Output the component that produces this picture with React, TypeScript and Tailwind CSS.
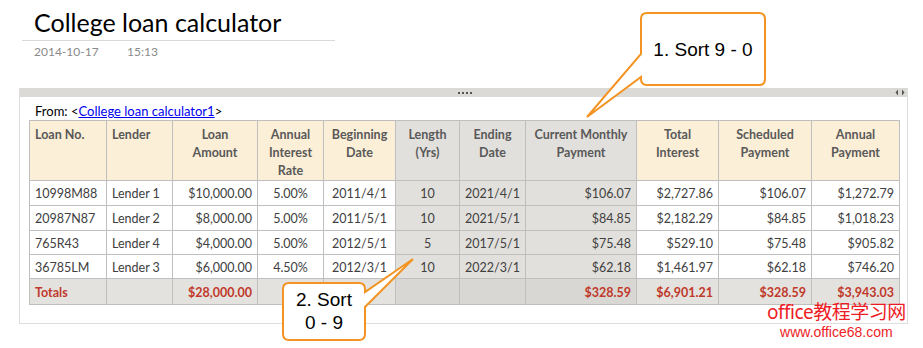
export default function App() {
  const cols = [77, 66, 85, 66, 72, 64, 66, 111, 82, 93, 88];

  // gray columns (Length, Ending Date, Current Monthly Payment)
  const grayCol = [false, false, false, false, false, true, true, true, false, false, false];

  const headers = [
    { t: ["Loan No."], a: "text-left" },
    { t: ["Lender"], a: "text-left" },
    { t: ["Loan", "Amount"], a: "text-center" },
    { t: ["Annual", "Interest", "Rate"], a: "text-center" },
    { t: ["Beginning", "Date"], a: "text-center" },
    { t: ["Length", "(Yrs)"], a: "text-center" },
    { t: ["Ending", "Date"], a: "text-center" },
    { t: ["Current Monthly", "Payment"], a: "text-center" },
    { t: ["Total", "Interest"], a: "text-center" },
    { t: ["Scheduled", "Payment"], a: "text-center" },
    { t: ["Annual", "Payment"], a: "text-center" },
  ];

  const align = [
    "text-left",
    "text-left",
    "text-right",
    "text-center",
    "text-center",
    "text-center",
    "text-center",
    "text-right",
    "text-right",
    "text-right",
    "text-right",
  ];

  const rows = [
    ["10998M88", "Lender 1", "$10,000.00", "5.00%", "2011/4/1", "10", "2021/4/1", "$106.07", "$2,727.86", "$106.07", "$1,272.79"],
    ["20987N87", "Lender 2", "$8,000.00", "5.00%", "2011/5/1", "10", "2021/5/1", "$84.85", "$2,182.29", "$84.85", "$1,018.23"],
    ["765R43", "Lender 4", "$4,000.00", "5.00%", "2012/5/1", "5", "2017/5/1", "$75.48", "$529.10", "$75.48", "$905.82"],
    ["36785LM", "Lender 3", "$6,000.00", "4.50%", "2012/3/1", "10", "2022/3/1", "$62.18", "$1,461.97", "$62.18", "$746.20"],
  ];
  const rowH = [25, 25, 24, 24];

  const totals = ["Totals", "", "$28,000.00", "", "", "", "", "$328.59", "$6,901.21", "$328.59", "$3,943.03"];

  return (
    <div className="relative flex flex-col w-[923px] h-[348px] overflow-hidden bg-white font-['Lato','Noto_Sans',sans-serif]">
      {/* Page title */}
      <div className="pt-[6px] pl-[22px]">
        <div className="w-[313px] border-b border-[#d9d9d9] pl-[12px] pb-[2px]">
          <div className="text-[25px] leading-[32px] text-black">College loan calculator</div>
        </div>
        <div className="flex pl-[12px] pt-[4px] text-[12px] leading-[14px] text-[#8a8a8a]">
          <span className="w-[93px]">2014-10-17</span>
          <span>15:13</span>
        </div>
      </div>

      {/* Note container */}
      <div className="ml-[19px] mt-[29px] w-[889px] h-[236px] border-x border-b border-[#dedede]">
        <div className="flex items-center h-[9px] bg-[#dcdad6]">
          <div className="flex flex-1 justify-center gap-[2px] pl-[14px]">
            <span className="w-[2px] h-[2px] bg-[#555]" />
            <span className="w-[2px] h-[2px] bg-[#555]" />
            <span className="w-[2px] h-[2px] bg-[#555]" />
            <span className="w-[2px] h-[2px] bg-[#555]" />
          </div>
          <svg width="10" height="7" viewBox="0 0 10 7" className="mr-[2px]">
            <path d="M3 0.5 L0.5 3.5 L3 6.5 Z" fill="#555" />
            <path d="M7 0.5 L9.5 3.5 L7 6.5 Z" fill="#555" />
          </svg>
        </div>
        <div className="pl-[15px] pt-[6px] text-[13px] leading-[17px] text-black">
          From: &lt;<span className="text-[#0000ee] underline">College loan calculator1</span>&gt;
        </div>
        <table className="ml-[9px] border-collapse text-[12.5px] leading-[18px] table-fixed">
          <colgroup>
            {cols.map((w, i) => (
              <col key={i} style={{ width: w }} />
            ))}
          </colgroup>
          <thead>
            <tr className="h-[60px]">
              {headers.map((h, i) => (
                <th
                  key={i}
                  className={`border border-[#bfbfbf] align-top px-[5px] pt-[5px] font-bold text-[#595959] ${h.a} ${
                    grayCol[i] ? "bg-[#e2e0dc]" : "bg-[#fcefd7]"
                  }`}
                >
                  {h.t.map((l, j) => (
                    <div key={j} className="whitespace-nowrap">{l}</div>
                  ))}
                </th>
              ))}
            </tr>
          </thead>
          <tbody>
            {rows.map((r, ri) => (
              <tr key={ri} style={{ height: rowH[ri] }}>
                {r.map((c, ci) => (
                  <td
                    key={ci}
                    className={`border border-[#bfbfbf] px-[5px] pt-[2px] pb-0 whitespace-nowrap text-[#404040] ${align[ci]} ${
                      grayCol[ci] ? "bg-[#e2e0dc]" : "bg-white"
                    }`}
                  >
                    {c}
                  </td>
                ))}
              </tr>
            ))}
            <tr className="h-[26px]">
              {totals.map((c, ci) => (
                <td
                  key={ci}
                  className={`border border-[#bfbfbf] px-[5px] pt-[2px] pb-0 whitespace-nowrap font-bold text-[#c0392b] ${
                    ci === 0 ? "text-left" : "text-right"
                  } ${grayCol[ci] ? "bg-[#d9d7d3]" : "bg-[#e4e2de]"}`}
                >
                  {c}
                </td>
              ))}
            </tr>
          </tbody>
        </table>
      </div>

      {/* Callouts (drawn over the table) */}
      <svg className="absolute left-0 top-0" width="923" height="348" viewBox="0 0 923 348">
        <path
          d="M647 13 H759 Q765 13 765 19 V79 Q765 85 759 85 H647 Q641 85 641 79 V77 L587 117 L641 54 V19 Q641 13 647 13 Z"
          fill="white"
          stroke="#f39322"
          strokeWidth="2"
        />
        <path
          d="M289 283 H359 Q365 283 365 289 V292 L413 259 L365 307 V334 Q365 340 359 340 H289 Q283 340 283 334 V289 Q283 283 289 283 Z"
          fill="white"
          stroke="#f39322"
          strokeWidth="2"
        />
      </svg>
      <div className="absolute left-[641px] top-[38px] w-[124px] text-center font-['Liberation_Sans',Arial,sans-serif] text-[19px] leading-[24px] text-black">
        1. Sort 9 - 0
      </div>
      <div className="absolute left-[283px] top-[288px] w-[82px] text-center font-['Liberation_Sans',Arial,sans-serif] text-[19px] leading-[23px] text-black">
        <div>2. Sort</div>
        <div>0 - 9</div>
      </div>

      {/* Watermark */}
      <div className="absolute left-[767px] top-[300px] flex flex-col items-center text-[#ee1c25] whitespace-nowrap">
        <div className="font-['Noto_Sans','Noto_Sans_CJK_SC',sans-serif] text-[19px] leading-[24px] tracking-[-0.5px]">
          office教程学习网
        </div>
        <div className="font-['Liberation_Sans',Arial,sans-serif] text-[14px] leading-[16px]">www.office68.com</div>
      </div>
    </div>
  );
}
